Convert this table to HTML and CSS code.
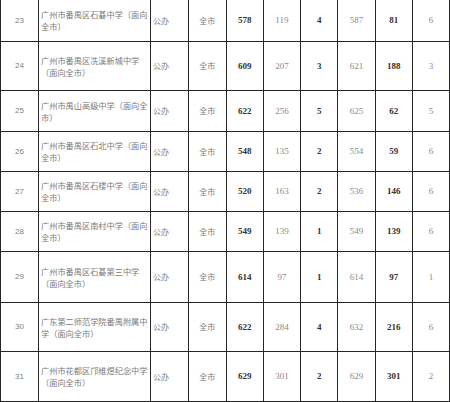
FILE: index.html
```html
<!DOCTYPE html>
<html lang="zh">
<head>
<meta charset="utf-8">
<link rel="stylesheet" href="styles.css">
</head>
<body>
<table class="grid">
  <colgroup>
    <col class="c-no"><col class="c-name"><col class="c-type"><col class="c-area">
    <col class="c-n"><col class="c-n"><col class="c-n"><col class="c-n"><col class="c-n"><col class="c-n">
  </colgroup>
  <tbody>
    <tr class="h41 first"><td class="no">23</td><td class="name">广州市番禺区石碁中学（面向全市）</td><td class="type">公办</td><td class="area">全市</td><td class="b">578</td><td class="g">119</td><td class="b">4</td><td class="g">587</td><td class="b">81</td><td class="g">6</td></tr>
    <tr class="h49"><td class="no">24</td><td class="name">广州市番禺区冼溪新城中学（面向全市）</td><td class="type">公办</td><td class="area">全市</td><td class="b">609</td><td class="g">207</td><td class="b">3</td><td class="g">621</td><td class="b">188</td><td class="g">3</td></tr>
    <tr class="h41"><td class="no">25</td><td class="name">广州市禺山高级中学（面向全市）</td><td class="type">公办</td><td class="area">全市</td><td class="b">622</td><td class="g">256</td><td class="b">5</td><td class="g">625</td><td class="b">62</td><td class="g">5</td></tr>
    <tr class="h40"><td class="no">26</td><td class="name">广州市番禺区石北中学（面向全市）</td><td class="type">公办</td><td class="area">全市</td><td class="b">548</td><td class="g">135</td><td class="b">2</td><td class="g">554</td><td class="b">59</td><td class="g">6</td></tr>
    <tr class="h40"><td class="no">27</td><td class="name">广州市番禺区石楼中学（面向全市）</td><td class="type">公办</td><td class="area">全市</td><td class="b">520</td><td class="g">163</td><td class="b">2</td><td class="g">536</td><td class="b">146</td><td class="g">6</td></tr>
    <tr class="h40"><td class="no">28</td><td class="name">广州市番禺区南村中学（面向全市）</td><td class="type">公办</td><td class="area">全市</td><td class="b">549</td><td class="g">139</td><td class="b">1</td><td class="g">549</td><td class="b">139</td><td class="g">6</td></tr>
    <tr class="h51"><td class="no">29</td><td class="name">广州市番禺区石碁第三中学（面向全市）</td><td class="type">公办</td><td class="area">全市</td><td class="b">614</td><td class="g">97</td><td class="b">1</td><td class="g">614</td><td class="b">97</td><td class="g">1</td></tr>
    <tr class="h49"><td class="no">30</td><td class="name">广东第二师范学院番禺附属中学（面向全市）</td><td class="type">公办</td><td class="area">全市</td><td class="b">622</td><td class="g">284</td><td class="b">4</td><td class="g">632</td><td class="b">216</td><td class="g">6</td></tr>
    <tr class="h50"><td class="no">31</td><td class="name">广州市花都区邝维煜纪念中学（面向全市）</td><td class="type">公办</td><td class="area">全市</td><td class="b">629</td><td class="g">301</td><td class="b">2</td><td class="g">629</td><td class="b">301</td><td class="g">2</td></tr>
  </tbody>
</table>
</body>
</html>
```

FILE: styles.css
```css
html, body {
  margin: 0;
  padding: 0;
  background: #fff;
}
.grid {
  border-collapse: collapse;
  table-layout: fixed;
  width: 449px;
}
.c-no { width: 38px; }
.c-name { width: 112px; }
.c-type { width: 38px; }
.c-area { width: 37.5px; }
.c-n { width: 37.25px; }
.grid td {
  border: 1px solid #262626;
  padding: 0 2px;
  text-align: center;
  vertical-align: middle;
  font-family: "Liberation Serif", serif;
  font-size: 9px;
  color: #8a8a8a;
  overflow: hidden;
}
.grid tr.first td { border-top: none; }
.h40 { height: 40px; }
.h41 { height: 41px; }
.h49 { height: 49px; }
.h50 { height: 50px; }
.h51 { height: 51px; }
.grid td.no {
  font-family: "Liberation Sans", sans-serif;
  font-size: 8px;
  color: #808080;
}
.grid td.name {
  text-align: left;
  font-family: "Noto Sans CJK SC", sans-serif;
  font-size: 8.2px;
  line-height: 12px;
  color: #7a7a7a;
}
.grid td.type {
  text-align: left;
  font-family: "Noto Sans CJK SC", sans-serif;
  font-size: 8px;
  color: #7a7a7a;
}
.grid td.area {
  font-family: "Noto Sans CJK SC", sans-serif;
  font-size: 8px;
  color: #7a7a7a;
}
.grid td.b {
  font-weight: bold;
  color: #333;
}
.grid td.g {
  color: #8a8a8a;
}
```
